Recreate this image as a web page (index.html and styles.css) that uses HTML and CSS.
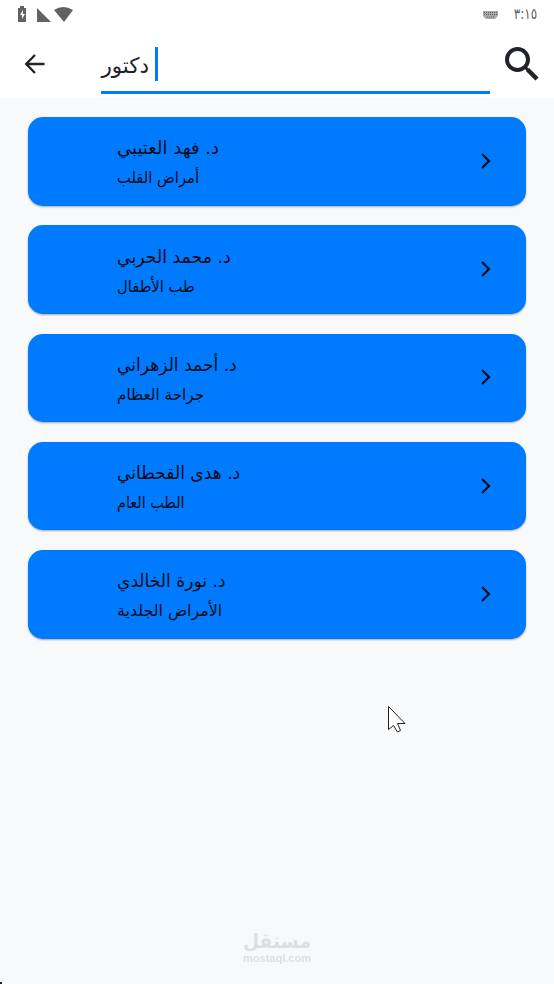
FILE: index.html
```html
<!DOCTYPE html>
<html lang="ar">
<head>
<meta charset="utf-8">
<title>دكتور</title>
<link rel="stylesheet" href="styles.css">
</head>
<body>
<header class="top">
  <div class="status">
    <svg class="status-icons" width="60" height="18" viewBox="0 0 60 18" fill="#626262">
      <path fill-rule="evenodd" d="M3 2V0H7V2H9V16H1V2ZM6 4 3 9H5V13L8 8H6Z"/>
      <path d="M20 2V16H34Z"/><path d="M37 4Q46-2 56 4L47 16Z"/>
    </svg>
    <svg class="keyboard" width="15" height="8" viewBox="0 0 15 8"><path d="M0 0H15V5L12 8H3L0 5Z" fill="#aaa"/><path d="M1 1.5H14M1 3.5H14M4 6H11" stroke="#606060" stroke-dasharray="1 1"/></svg>
    <span class="time">٣:١٥</span>
  </div>
  <div class="search">
    <svg class="back" width="20" height="20" viewBox="0 0 20 20" fill="none" stroke="#202329" stroke-width="2.3"><path d="M19.5 10H2M10 1 1.2 10l8.8 9"/></svg>
    <div class="field"><span class="query" dir="rtl">دكتور</span><i class="caret"></i></div>
    <svg class="lens" width="34" height="34" viewBox="0 0 34 34" fill="none" stroke="#202329"><circle cx="12.5" cy="12.5" r="10.5" stroke-width="4"/><path d="m20 20 3 3" stroke-width="3"/><path d="m22.5 22.5 9.5 9.5" stroke-width="4.5"/></svg>
  </div>
</header>
<main class="list">
  <article class="card"><div class="text"><h2 dir="rtl">د. فهد العتيبي</h2><p dir="rtl">أمراض القلب</p></div><svg class="chevron" viewBox="0 0 10 16"><path d="m1 1 7 7-7 7"/></svg></article>
  <article class="card"><div class="text"><h2 dir="rtl">د. محمد الحربي</h2><p dir="rtl">طب الأطفال</p></div><svg class="chevron" viewBox="0 0 10 16"><path d="m1 1 7 7-7 7"/></svg></article>
  <article class="card"><div class="text"><h2 dir="rtl">د. أحمد الزهراني</h2><p dir="rtl">جراحة العظام</p></div><svg class="chevron" viewBox="0 0 10 16"><path d="m1 1 7 7-7 7"/></svg></article>
  <article class="card"><div class="text"><h2 dir="rtl">د. هدى القحطاني</h2><p dir="rtl">الطب العام</p></div><svg class="chevron" viewBox="0 0 10 16"><path d="m1 1 7 7-7 7"/></svg></article>
  <article class="card"><div class="text"><h2 dir="rtl">د. نورة الخالدي</h2><p dir="rtl">الأمراض الجلدية</p></div><svg class="chevron" viewBox="0 0 10 16"><path d="m1 1 7 7-7 7"/></svg></article>
</main>
<footer class="brand"><div class="brand-ar" dir="rtl">مستقل</div><div class="brand-en">mostaql.com</div></footer>
<svg class="pointer" width="20" height="28" viewBox="0 0 20 28"><path d="M1.5 1.5V24.5L6.5 20.5 10.5 27 13.5 25.5 10.5 18.5H18Z" fill="#fff" stroke="#202020"/></svg>
<i class="corner"></i>
</body>
</html>
```
FILE: styles.css
```css
* { box-sizing: border-box; }
body { margin: 0; height: 984px; display: flex; flex-direction: column; overflow: hidden; background: #f8f9fb; font-family: "DejaVu Sans", sans-serif; color: #030b16; }
.top { height: 98px; background: #fff; }
.status { height: 30px; display: flex; align-items: flex-start; padding: 6px 17px 0; }
.keyboard { margin: 5px 10px 0 auto; }
.time { font: 15px/17px "DejaVu Sans", sans-serif; color: #626262; transform: scaleX(.8); transform-origin: right; }
.search { height: 68px; display: flex; padding: 0 15px 0 25px; }
.back { margin-top: 24px; }
.field { width: 389px; height: 64px; margin: 0 15px 0 56px; border-bottom: 3px solid #007bff; display: flex; align-items: flex-start; }
.query { width: 48px; margin-top: 21px; font-size: 21.4px; line-height: 30px; white-space: nowrap; color: #202329; }
.caret { width: 3px; height: 34px; margin: 17px 0 0 6px; background: #007bff; }
.lens { margin-top: 17px; flex: none; }
.list { padding: 19px 28px 0; display: flex; flex-direction: column; gap: 19.75px; flex: 1; }
.card { height: 88.5px; flex: none; border-radius: 15px; background: #007bff; box-shadow: 0 1px 2px #0005; display: flex; padding: 16.4px 34px 0 89px; }
.text { display: flex; flex-direction: column; align-items: flex-start; flex: 1; }
h2, p { margin: 0; font-weight: 400; white-space: nowrap; line-height: 30px; transform: scaleX(var(--fit)); transform-origin: left; }
h2 { font-size: 18px; --fit: .95; }
p { font-size: 16px; --fit: .92; }
.card:first-child h2 { --fit: 1; }
.card:nth-child(2) h2 { --fit: .96; }
.card:nth-child(3) p { --fit: .95; }
.card:nth-child(4) p { --fit: .9; }
.card:last-child p { --fit: .99; }
.chevron { width: 10px; height: 16px; margin: 19.6px 1px 0 -1px; fill: none; stroke: #030b16; stroke-width: 2.2; }
.brand { height: 55px; padding-top: 1px; text-align: center; color: #dedfe1; }
.brand-ar { font-size: 20px; font-weight: 700; line-height: 22px; transform: scaleX(.93); }
.brand-en { font: 700 11px/12px "Liberation Sans", sans-serif; }
.pointer { position: absolute; left: 387px; top: 705px; }
.corner { position: absolute; left: 0; bottom: 0; width: 2px; height: 2px; background: #222; }
```
